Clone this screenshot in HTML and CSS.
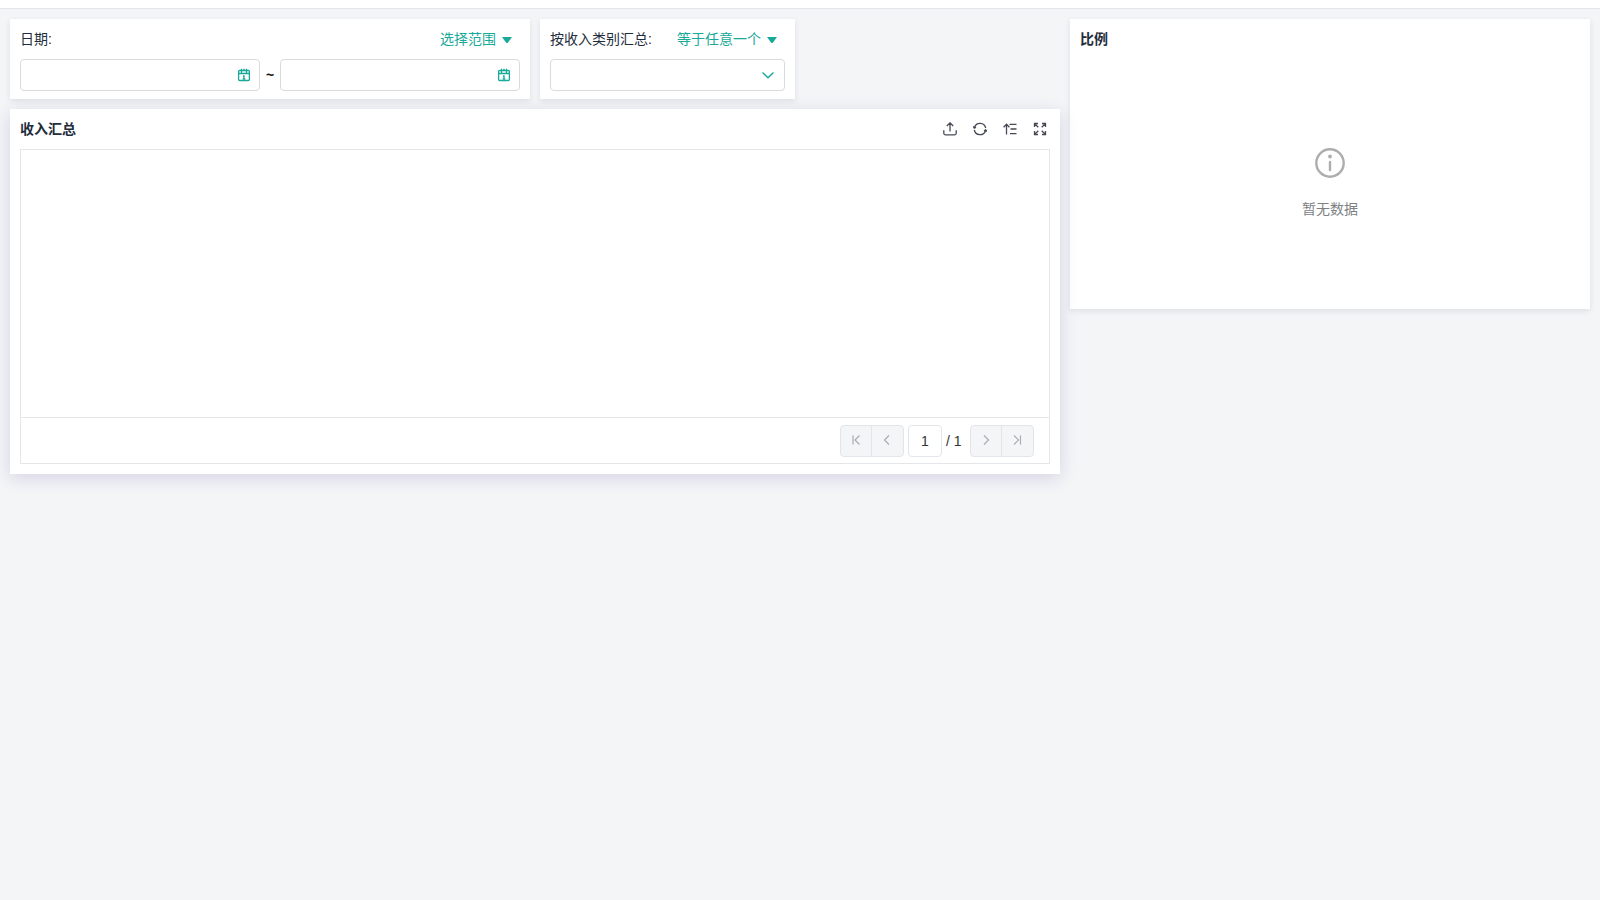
FILE: index.html
```
<!DOCTYPE html>
<html lang="zh-CN">
<head>
<meta charset="utf-8">
<meta name="viewport" content="width=device-width, initial-scale=1">
<title>收入汇总</title>
<link rel="stylesheet" href="styles.css">
</head>
<body>
<svg class="sprite" aria-hidden="true">
  <symbol id="calendar" viewBox="0 0 14 14">
    <rect x="1.600" y="2.500" width="10.800" height="10" rx="1"/>
    <path d="M1.600 5.500h10.800M4.500 .8v4M9.500 .8v4M7 .8v2M6 8h1v3M5.700 11h2.600"/>
  </symbol>
  <symbol id="caret" viewBox="0 0 10 6"><path d="M0 0h10L6 5.400a1.300 1.300 0 0 1-2 0z"/></symbol>
</svg>
<header class="topbar"></header>
<main class="board">
  <section class="card filter filter-date">
    <div class="card-head">
      <label for="start">日期:</label>
      <button class="mode" type="button">选择范围<svg class="caret"><use href="#caret"/></svg></button>
    </div>
    <div class="range">
      <div class="field">
        <input class="control" id="start" type="text">
        <button class="field-icon" type="button" aria-label="选择开始日期"><svg class="icon"><use href="#calendar"/></svg></button>
      </div>
      <span class="tilde">~</span>
      <div class="field">
        <input class="control" id="end" type="text" aria-label="结束日期">
        <button class="field-icon" type="button" aria-label="选择结束日期"><svg class="icon"><use href="#calendar"/></svg></button>
      </div>
    </div>
  </section>

  <section class="card filter filter-type">
    <div class="card-head">
      <label for="type">按收入类别汇总:</label>
      <button class="mode" type="button">等于任意一个<svg class="caret"><use href="#caret"/></svg></button>
    </div>
    <div class="field">
      <select class="control" id="type"><option value=""></option></select>
      <svg class="icon field-icon passive" viewBox="0 0 14 14"><path d="M1.500 4.500 7 9.800l5.500-5.300"/></svg>
    </div>
  </section>

  <section class="card ratio">
    <div class="card-head"><h2>比例</h2></div>
    <div class="empty">
      <svg class="empty-icon" viewBox="0 0 30 30"><circle cx="15" cy="15" r="13.700"/><path d="M15 14v8"/><circle class="dot" cx="15" cy="8.500" r="1.900"/></svg>
      <p>暂无数据</p>
    </div>
  </section>

  <section class="card summary">
    <div class="card-head">
      <h2>收入汇总</h2>
      <div class="tools">
        <button type="button" aria-label="导出"><svg class="icon" viewBox="0 0 14 14"><path d="M7 9.500V1M3.800 4 7 .9 10.200 4M.8 8.300v3q0 1.500 1.500 1.500h9.400q1.500 0 1.500-1.500v-3"/></svg></button>
        <button type="button" aria-label="刷新"><svg class="icon" viewBox="0 0 14 14"><path d="M1.500 5.300A5.800 5.800 0 0 1 12.700 6M12.500 8.700A5.800 5.800 0 0 1 1.300 8M11 8.900l1.700-1 1.200 1.600M3 5.100l-1.700 1L.1 4.500"/></svg></button>
        <button type="button" aria-label="排序"><svg class="icon" viewBox="0 0 14 14"><path d="M3.500 12.500v-10M.6 5.200 3.500 2.200 6.400 5.200M6.500 2.400h7M7.500 7h6M7 11.600h6.500"/></svg></button>
        <button type="button" aria-label="全屏"><svg class="icon" viewBox="0 0 14 14"><path d="M1.500 5V1.500H5M1.700 1.700l3.600 3.600M9 1.500h3.500V5M12.300 1.700 8.700 5.300M1.500 9v3.500H5M1.700 12.300l3.600-3.600M9 12.500h3.500V9M12.300 12.300 8.700 8.700"/></svg></button>
      </div>
    </div>
    <div class="grid-view">
      <div class="grid-body"></div>
      <nav class="pager" aria-label="分页">
        <div class="pair">
          <button type="button" disabled aria-label="第一页"><svg class="arrow" viewBox="0 0 10 10"><path d="M2 .5v9M8.500 .5 4 5l4.500 4.500"/></svg></button>
          <button type="button" disabled aria-label="上一页"><svg class="arrow" viewBox="0 0 10 10"><path d="M7 .5 2.500 5 7 9.500"/></svg></button>
        </div>
        <input class="page" type="text" value="1" aria-label="页码">
        <span class="total">/ 1</span>
        <div class="pair">
          <button type="button" disabled aria-label="下一页"><svg class="arrow" viewBox="0 0 10 10"><path d="M3 .5 7.500 5 3 9.500"/></svg></button>
          <button type="button" disabled aria-label="最后一页"><svg class="arrow" viewBox="0 0 10 10"><path d="M8.500 .5v9M2 .5 6.500 5 2 9.500"/></svg></button>
        </div>
      </nav>
    </div>
  </section>
</main>
</body>
</html>
```
FILE: styles.css
```
* {
  box-sizing: border-box;
}

body {
  margin: 0;
  min-height: 100vh;
  background: #f3f5f7;
  color: #1f2d3d;
  font: 14px/22px "Liberation Sans", "Noto Sans CJK SC", sans-serif;
}

button,
input,
select {
  margin: 0;
  padding: 0;
  border: 0;
  background: none;
  color: inherit;
  font: inherit;
}

button {
  cursor: pointer;
}

h2,
p {
  margin: 0;
  font-size: 14px;
}

.sprite {
  display: none;
}

.topbar {
  height: 9px;
  background: #fff;
  border-bottom: 1px solid #e4e5e8;
}

.board {
  display: grid;
  grid-template-columns: repeat(12, minmax(0, 1fr));
  grid-template-rows: auto auto;
  gap: 10px;
  padding: 10px;
  align-items: start;
}

.card {
  padding: 0 10px;
  background: #fff;
  box-shadow: 0 2px 6px rgba(40, 40, 80, 0.1);
}

.filter {
  padding-bottom: 8px;
}

.filter-date {
  grid-column: 1 / span 4;
}

.filter-type {
  grid-column: 5 / span 2;
}

.ratio {
  grid-column: 9 / span 4;
  grid-row: 1 / span 2;
}

.summary {
  grid-column: 1 / span 8;
  grid-row: 2;
  padding-bottom: 10px;
  box-shadow: 0 4px 16px rgba(70, 40, 130, 0.16);
}

.card-head {
  display: flex;
  align-items: center;
  justify-content: space-between;
  height: 40px;
  white-space: nowrap;
}

.mode {
  display: flex;
  align-items: center;
  gap: 6px;
  padding-right: 8px;
  color: #18a999;
}

.caret {
  width: 10px;
  height: 6px;
  margin-top: 2px;
  fill: currentColor;
}

.range {
  display: flex;
  align-items: center;
}

.tilde {
  width: 20px;
  color: #111;
  font-weight: bold;
  text-align: center;
}

.field {
  position: relative;
  flex: 1;
}

.control {
  display: block;
  width: 100%;
  height: 32px;
  padding: 0 32px 0 10px;
  border: 1px solid #d9dbde;
  border-radius: 4px;
  background: #fff;
  appearance: none;
}

.icon {
  display: block;
  width: 14px;
  height: 14px;
  fill: none;
  stroke: currentColor;
  stroke-width: 1.3;
}

.field-icon {
  position: absolute;
  top: 9px;
  right: 9px;
  color: #18a999;
}

.passive {
  right: 10px;
  stroke-width: 1.4;
  pointer-events: none;
}

.tools {
  display: flex;
  gap: 16px;
  padding-right: 3px;
  color: #474a55;
}

.grid-view {
  border: 1px solid #e4e6e9;
}

.grid-body {
  height: 267px;
}

.pager {
  display: flex;
  align-items: center;
  justify-content: flex-end;
  height: 46px;
  padding-right: 15px;
  border-top: 1px solid #e4e6e9;
}

.pair {
  display: flex;
  overflow: hidden;
  border: 1px solid #e3e6e9;
  border-radius: 4px;
  background: #f3f5f7;
}

.pair button {
  display: grid;
  place-items: center;
  width: 30px;
  height: 30px;
  padding-bottom: 2px;
}

.pair button + button {
  width: 32px;
  padding-right: 2px;
  border-left: 1px solid #e3e6e9;
}

.arrow {
  width: 10px;
  height: 10px;
  fill: none;
  stroke: #a9adb2;
  stroke-width: 1.2;
}

.page {
  width: 34px;
  height: 32px;
  margin: 0 4px;
  border: 1px solid #e3e6e9;
  border-radius: 4px;
  color: #333;
  text-align: center;
}

.total {
  width: 24px;
  color: #333;
}

.empty {
  display: flex;
  flex-direction: column;
  align-items: center;
  justify-content: center;
  gap: 20px;
  height: 250px;
  color: #7d8185;
}

.empty-icon {
  width: 30px;
  height: 30px;
  fill: none;
  stroke: #adadad;
  stroke-width: 2.4;
  stroke-linecap: round;
}

.empty-icon .dot {
  fill: #adadad;
  stroke: none;
}
```
